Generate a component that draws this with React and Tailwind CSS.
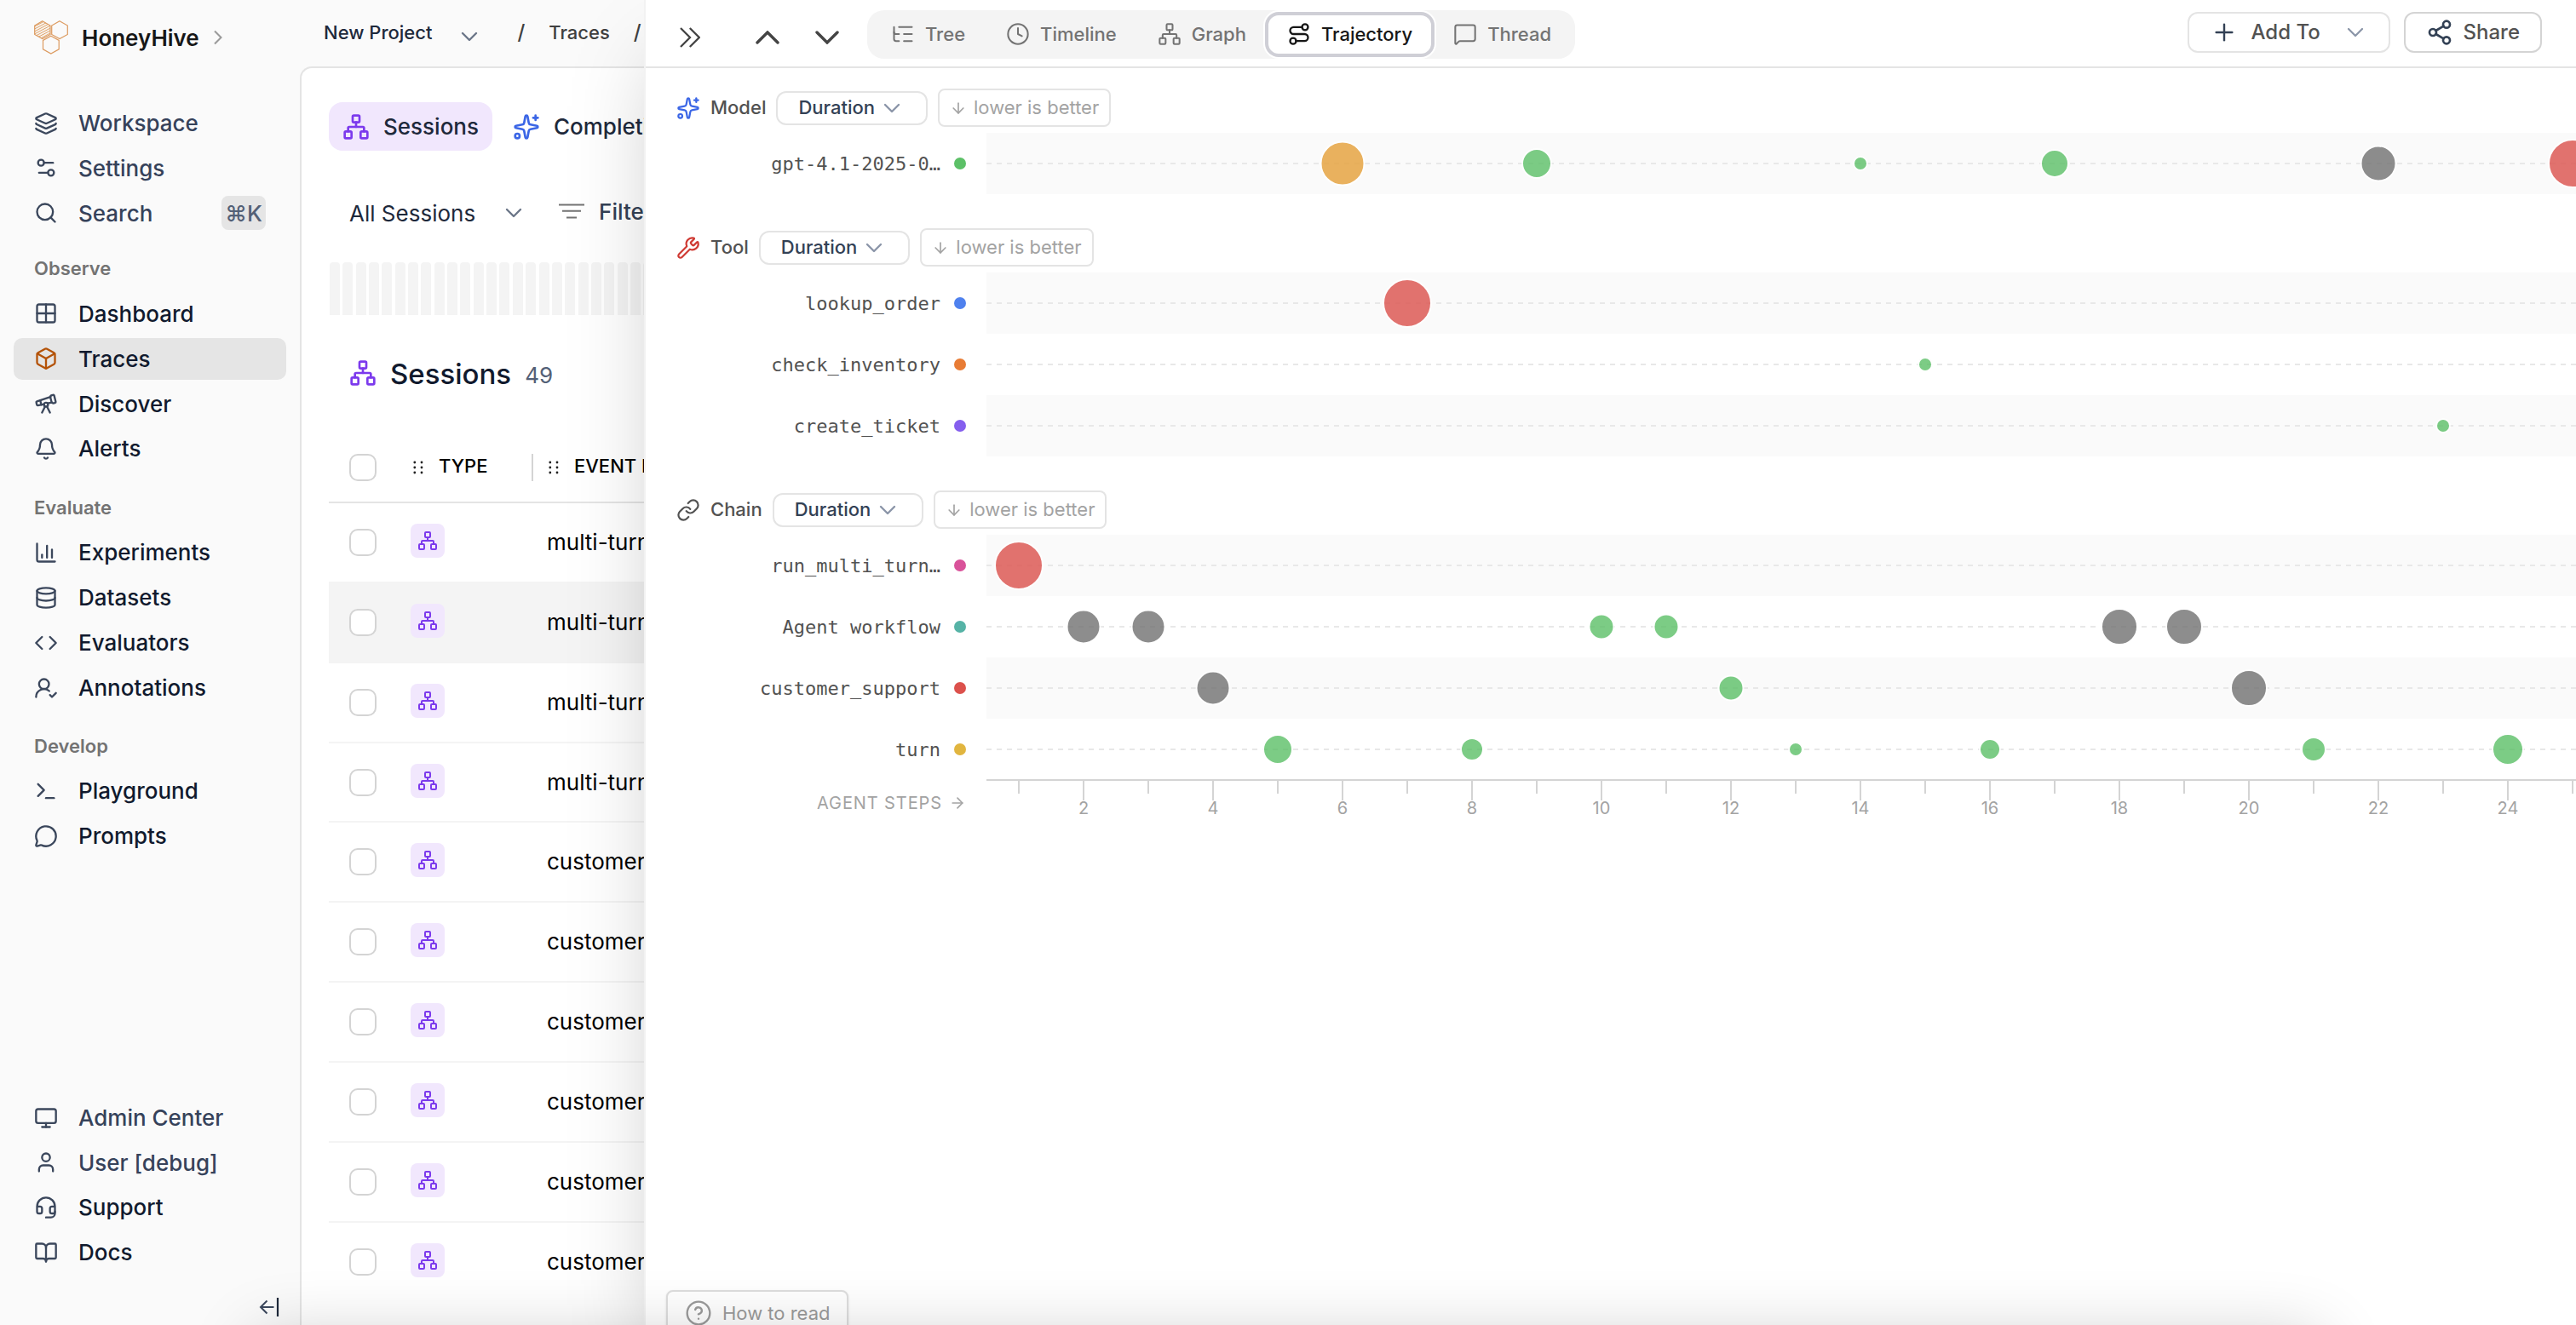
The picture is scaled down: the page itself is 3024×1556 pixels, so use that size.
import {
  ArrowDown,
  ArrowRight,
  Bell,
  BookOpen,
  Box,
  ChartColumn,
  ChevronDown,
  CircleHelp,
  Clock,
  Code,
  Database,
  Grid2x2,
  Headset,
  Layers,
  Link,
  ListTree,
  MessageCircle,
  MessageSquare,
  Monitor,
  Network,
  Plus,
  Route,
  Search,
  Settings2,
  Share2,
  Sparkles,
  Telescope,
  Terminal,
  User,
  UserRoundCheck,
  Wrench,
} from "lucide-react";
import clsx from "clsx";

const STEP = 76;
const LAST_STEP = 25;

const COLORS = {
  green: "#5cc067",
  orange: "#e6a038",
  red: "#dc514c",
  gray: "#717171",
};

const workspaceLinks = [
  { name: "Workspace", icon: Layers },
  { name: "Settings", icon: Settings2 },
  { name: "Search", icon: Search, shortcut: "⌘K" },
];

const navSections = [
  {
    title: "Observe",
    className: "mt-[25px]",
    links: [
      { name: "Dashboard", icon: Grid2x2 },
      { name: "Traces", icon: Box, active: true },
      { name: "Discover", icon: Telescope },
      { name: "Alerts", icon: Bell },
    ],
  },
  {
    title: "Evaluate",
    className: "mt-[29px]",
    links: [
      { name: "Experiments", icon: ChartColumn },
      { name: "Datasets", icon: Database },
      { name: "Evaluators", icon: Code },
      { name: "Annotations", icon: UserRoundCheck },
    ],
  },
  {
    title: "Develop",
    className: "mt-[28px]",
    links: [
      { name: "Playground", icon: Terminal },
      { name: "Prompts", icon: MessageCircle },
    ],
  },
];

const footerLinks = [
  { name: "Admin Center", icon: Monitor, muted: true },
  { name: "User [debug]", icon: User, muted: true },
  { name: "Support", icon: Headset },
  { name: "Docs", icon: BookOpen },
];

const sessions = [
  { name: "multi-turn-support" },
  { name: "multi-turn-support", active: true },
  { name: "multi-turn-support" },
  { name: "multi-turn-support" },
  { name: "customer-support" },
  { name: "customer-support" },
  { name: "customer-support" },
  { name: "customer-support" },
  { name: "customer-support" },
  { name: "customer-support" },
];

const tabs = [
  { name: "Tree", icon: ListTree },
  { name: "Timeline", icon: Clock },
  { name: "Graph", icon: Network },
  { name: "Trajectory", icon: Route, active: true },
  { name: "Thread", icon: MessageSquare },
];

const groups = [
  {
    name: "Model",
    icon: Sparkles,
    iconClass: "text-[#3b66e6]",
    lanes: [
      {
        label: "gpt-4.1-2025-0…",
        dot: "#5cc067",
        points: [
          [6, 24.5, "orange"],
          [9, 16, "green"],
          [14, 7, "green"],
          [17, 15, "green"],
          [22, 19.5, "gray"],
          [25, 27, "red"],
        ],
      },
    ],
  },
  {
    name: "Tool",
    icon: Wrench,
    iconClass: "text-[#cf3a33]",
    lanes: [
      { label: "lookup_order", dot: "#4f81ee", points: [[7, 27, "red"]] },
      { label: "check_inventory", dot: "#e87c35", points: [[15, 7, "green"]] },
      { label: "create_ticket", dot: "#855fee", points: [[23, 7, "green"]] },
    ],
  },
  {
    name: "Chain",
    icon: Link,
    iconClass: "text-[#525252]",
    lanes: [
      { label: "run_multi_turn…", dot: "#d9529a", points: [[1, 27, "red"]] },
      {
        label: "Agent workflow",
        dot: "#56b3a6",
        points: [
          [2, 18.5, "gray"],
          [3, 18.5, "gray"],
          [10, 13.5, "green"],
          [11, 13.5, "green"],
          [18, 20, "gray"],
          [19, 20, "gray"],
        ],
      },
      {
        label: "customer_support",
        dot: "#dc514c",
        points: [
          [4, 18.5, "gray"],
          [12, 13.5, "green"],
          [20, 20, "gray"],
        ],
      },
      {
        label: "turn",
        dot: "#e1b53f",
        points: [
          [5, 16, "green"],
          [8, 12, "green"],
          [13, 7, "green"],
          [16, 11, "green"],
          [21, 13, "green"],
          [24, 17, "green"],
        ],
      },
    ],
  },
];

const stepX = (step) => step * STEP - 38;

const Logo = () => (
  <svg width="40" height="40" viewBox="0 0 40 40" fill="none" stroke="#dc9a5f" strokeWidth="1.2">
    <defs>
      <pattern id="hatch" width="2.6" height="2.6" patternUnits="userSpaceOnUse" patternTransform="rotate(-28)">
        <path d="M0 1.3H2.6" stroke="#dfa269" strokeWidth="1" />
      </pattern>
    </defs>
    <path d="M9.8.8 19 6v10.4l-9.2 5.2L.7 16.4V6z" fill="url(#hatch)" />
    <path d="M30 .8 39.3 6v10.4L30 21.6l-9.3-5.2V6z" />
    <path d="M19.8 18.200 29.200 23.400v10.400l-9.400 5.300-9.300-5.300V23.400z" />
  </svg>
);

const NavItem = ({ name, icon: Icon, active, muted, shortcut }) => (
  <a
    className={clsx(
      "flex h-[49px] items-center rounded-[10px] px-6 text-[26px] font-medium",
      active && "bg-[#e5e5e5]",
      muted ? "text-[#36425a]" : "text-[#111a2e]"
    )}
  >
    <Icon className={clsx("mr-6 size-7 shrink-0", active ? "text-[#b45309]" : "text-[#3b475c]")} />
    <span>{name}</span>
    {shortcut && (
      <kbd className="ml-auto flex h-10 w-[52px] items-center justify-center rounded-lg bg-[#e5e5e5] font-['Inter',sans-serif] font-medium text-[#536076]">
        {shortcut}
      </kbd>
    )}
  </a>
);

const Sidebar = () => (
  <aside className="flex h-full w-[352px] shrink-0 flex-col bg-[#fafafa] px-4">
    <div className="mt-6 flex h-10 items-center pl-6">
      <Logo />
      <span className="ml-4 text-[26px] font-semibold text-[#171717]">HoneyHive</span>
      <svg className="ml-4" width="12" height="18" viewBox="0 0 12 18" fill="none" stroke="#9a9a9a" strokeWidth="2">
        <path d="M2 1.500 9.500 9 2 16.500" />
      </svg>
    </div>
    <nav className="mt-14 flex flex-col gap-[3.9px]">
      {workspaceLinks.map((link) => (
        <NavItem key={link.name} muted {...link} />
      ))}
    </nav>
    {navSections.map((section) => (
      <div key={section.title} className={section.className}>
        <h4 className="mb-3 flex h-8 items-center pl-6 text-[22px] font-semibold text-[#737373]">{section.title}</h4>
        <nav className="flex flex-col gap-[3.9px]">
          {section.links.map((link) => (
            <NavItem key={link.name} {...link} />
          ))}
        </nav>
      </div>
    ))}
    <nav className="mt-auto flex flex-col gap-[3.6px]">
      {footerLinks.map((link) => (
        <NavItem key={link.name} {...link} />
      ))}
    </nav>
    <div className="mt-7 mb-[9px] flex justify-end pr-2">
      <svg width="24" height="24" viewBox="0 0 24 24" fill="none">
        <path d="M17.500 12H2M9.500 4.500 2 12l7.500 7.500" stroke="#3b475c" strokeWidth="2" />
        <path d="M22 1v22" stroke="#1e293b" strokeWidth="2.200" />
      </svg>
    </div>
  </aside>
);

const Breadcrumbs = () => (
  <div className="flex h-[78px] items-center pb-[2px] pl-[28px] text-[22px] font-medium">
    <span className="text-[#1e293b]">New Project</span>
    <ChevronDown className="mt-[9px] ml-[28px] size-8 text-[#6b7688]" strokeWidth={1.800} />
    <span className="ml-[40px] text-[24px] text-[#404040]">/</span>
    <span className="ml-[28px] text-[#404040]">Traces</span>
    <span className="ml-[28px] text-[24px] text-[#404040]">/</span>
  </div>
);

const Checkbox = () => <span className="size-8 shrink-0 rounded-[10px] border-2 border-[#d4d4d4] bg-white" />;

const Grip = () => (
  <svg width="12" height="16" viewBox="0 0 12 16" fill="#222">
    {[2, 8, 14].map((y) => (
      <g key={y}>
        <circle cx="1.800" cy={y} r="1.400" />
        <circle cx="10" cy={y} r="1.400" />
      </g>
    ))}
  </svg>
);

const SessionsPage = () => (
  <main className="flex-1 rounded-tl-[14px] border-t-2 border-l-2 border-[#e4e4e4] bg-white pl-8">
    <div className="mt-10 flex gap-2 text-[26px] font-medium text-[#1e293b]">
      <button className="flex h-[57px] items-center gap-4 rounded-2xl bg-[#f1e7fd] px-4">
        <Network className="size-8 text-[#7c3aed]" />
        Sessions
      </button>
      <button className="flex h-[57px] items-center gap-4 px-4">
        <Sparkles className="size-8 text-[#3b66e6]" />
        Completions
      </button>
    </div>

    <div className="mt-[48px] flex h-[50px] items-center pl-6 text-[26px] text-[#1e293b]">
      <span>All Sessions</span>
      <ChevronDown className="ml-[29px] size-8 text-[#6b7688]" strokeWidth={1.800} />
      <svg className="mb-1 ml-[37px]" width="30" height="18" viewBox="0 0 30 18" stroke="#737373" strokeWidth="2">
        <path d="M0 1.500h30M4 8.700h22M9 16.500h12" />
      </svg>
      <span className="mb-[3px] ml-[17px] font-medium text-[#334155]">Filters</span>
    </div>

    <div className="mt-[33px] flex gap-[3.35px] pl-px">
      {Array.from({ length: 26 }, (_, i) => (
        <span key={i} className="h-[62px] w-[12px] shrink-0 rounded-t-[4px] bg-[#f4f4f4]" />
      ))}
    </div>

    <div className="mt-[46px] flex h-[48px] items-center pl-6">
      <Network className="mb-1 size-8 text-[#7c3aed]" />
      <h1 className="ml-4 text-[33px] font-medium text-[#111a2e]">Sessions</h1>
      <span className="ml-[16px] text-[26px] text-[#536076]">49</span>
    </div>

    <div className="mt-[45px] flex h-[82px] items-center border-b-2 border-[#e4e4e4] pl-6 text-[22px] font-medium text-black">
      <div className="flex w-[216px] items-center">
        <Checkbox />
        <span className="ml-[43px]"><Grip /></span>
        <span className="mb-[3px] ml-[18px]">TYPE</span>
      </div>
      <span className="-ml-[2px] h-8 w-[2px] bg-[#d4d4d4]" />
      <span className="ml-[18px]"><Grip /></span>
      <span className="mb-[3px] ml-[18px] whitespace-nowrap">EVENT NAME</span>
    </div>
    {sessions.map((session, i) => (
      <div
        key={i}
        className={clsx(
          "flex h-[93.86px] items-center border-b-2 pl-6 text-[26px] text-black",
          i === sessions.length - 1 ? "border-transparent" : "border-[#f4f4f4]",
          session.active && "bg-[#f4f4f4]"
        )}
      >
        <Checkbox />
        <span className="mb-[4px] ml-10 flex size-10 items-center justify-center rounded-lg bg-[#f1e7fd]">
          <Network className="size-6 text-[#7c3aed]" />
        </span>
        <span className="mb-[1px] ml-[120px] whitespace-nowrap">{session.name}</span>
      </div>
    ))}
  </main>
);

const DrawerHeader = () => (
  <header className="flex h-[80px] shrink-0 items-center border-b-2 border-[#e4e4e4] pt-[2px] pr-10 pl-10">
    <svg className="mt-2" width="24" height="24" viewBox="0 0 24 24" fill="none" stroke="#444" strokeWidth="2.300">
      <path d="M1 1 12 12 1 23M11.800 1l11 11-11 11" />
    </svg>
    <svg className="mt-2 ml-[65px]" width="28" height="16" viewBox="0 0 28 16" fill="none" stroke="#444" strokeWidth="3.400" strokeLinecap="round">
      <path d="M2 14 14 2l12 12" />
    </svg>
    <svg className="mt-2 ml-[42px]" width="28" height="16" viewBox="0 0 28 16" fill="none" stroke="#444" strokeWidth="3.400" strokeLinecap="round">
      <path d="M2 2l12 12L26 2" />
    </svg>
    <div className="ml-[33px] flex h-[57px] rounded-[20px] bg-[#f4f4f4] p-1">
      {tabs.map(({ name, icon: Icon, active }) => (
        <button
          key={name}
          className={clsx(
            "flex items-center gap-3 text-[22px] font-medium",
            active
              ? "rounded-[14px] border-2 border-[#cfcfd6] bg-white px-[22px] text-[#171717] shadow-[0_0_0_2px_#cfcfd6,0_0_0_4px_#fff]"
              : "px-6 text-[#737373]"
          )}
        >
          <Icon className="size-7" strokeWidth={active ? 2 : 1.750} />
          {name}
        </button>
      ))}
    </div>
    <div className="mb-[4px] ml-auto flex gap-4 text-[24px] font-medium text-[#525252]">
      <button className="flex h-12 w-[238px] items-center rounded-xl border-2 border-[#e4e4e4] pl-[25px]">
        <Plus className="size-8 text-[#334155]" strokeWidth={1.800} />
        <span className="ml-[16px]">Add To</span>
        <ChevronDown className="ml-[25px] size-8 text-[#8b95a8]" strokeWidth={1.700} />
      </button>
      <button className="flex h-12 items-center gap-3 rounded-xl border-2 border-[#d4d4d4] px-6">
        <Share2 className="size-8 text-[#334155]" />
        Share
      </button>
    </div>
  </header>
);

const Lane = ({ label, dot, points, shaded }) => (
  <div className="flex h-[72px] items-center">
    <span className="w-[346px] shrink-0 text-right font-['DejaVu_Sans_Mono',monospace] text-[22px] whitespace-nowrap text-[#525252]">
      {label}
    </span>
    <span className="mr-6 ml-4 size-[14px] shrink-0 rounded-full" style={{ backgroundColor: dot }} />
    <svg className={clsx("shrink-0", shaded && "bg-[#fafafa]")} width="1866" height="72">
      <line x1="0" x2="1866" y1="36" y2="36" stroke="#e8e8e8" strokeWidth="2" strokeDasharray="6 6" />
      {points.map(([step, r, color]) => (
        <circle
          key={step}
          cx={stepX(step)}
          cy="36"
          r={r + 1}
          fill={COLORS[color]}
          stroke="#fff"
          strokeWidth="2"
          opacity="0.8"
        />
      ))}
    </svg>
  </div>
);

const Axis = () => (
  <div className="-mt-px flex">
    <div className="flex w-[400px] shrink-0 items-center justify-end gap-2 pt-[6px] pr-6 text-[20px] tracking-[0.045em] text-[#a3a3a3]">
      AGENT STEPS
      <ArrowRight className="size-5" strokeWidth={2} />
    </div>
    <svg className="shrink-0 font-['Inter',sans-serif]" width="1866" height="50" stroke="#d4d4d4" strokeWidth="2">
      <line x1="0" x2="1866" y1="1" y2="1" />
      {Array.from({ length: LAST_STEP }, (_, i) => i + 1).map((step) => (
        <g key={step}>
          <line x1={stepX(step)} x2={stepX(step)} y1="2" y2={step % 2 ? 17 : 25} />
          {step % 2 === 0 && (
            <text x={stepX(step)} y="41" textAnchor="middle" stroke="none" fill="#a3a3a3" fontSize="20">
              {step}
            </text>
          )}
        </g>
      ))}
    </svg>
  </div>
);

const Drawer = () => (
  <section className="absolute inset-y-0 right-0 left-[756px] flex flex-col border-l-2 border-[#f2f2f2] bg-white shadow-[0_50px_100px_-24px_rgba(0,0,0,0.25)]">
    <DrawerHeader />
    <div className="flex flex-col gap-10 overflow-hidden pt-6">
      {groups.map(({ name, icon: Icon, iconClass, lanes }) => (
        <div key={name}>
          <div className="mb-[7px] flex h-[45px] items-center pl-9 text-[22px]">
            <Icon className={clsx("size-7", iconClass)} strokeWidth={1.900} />
            <span className="ml-3 font-medium text-[#525252]">{name}</span>
            <button className="ml-3 flex h-10 items-center rounded-xl border-2 border-[#e4e4e4] px-6 font-medium text-[#334155]">
              Duration
              <ChevronDown className="ml-[4px] size-8" color="#8b95a8" strokeWidth={1.800} />
            </button>
            <span className="ml-3 flex h-[45px] items-center gap-2 rounded-lg border-2 border-[#e4e4e4] px-3 text-[#a3a3a3]">
              <ArrowDown className="size-5" strokeWidth={2} />
              lower is better
            </span>
          </div>
          {lanes.map((lane, i) => (
            <Lane key={lane.label} {...lane} shaded={i % 2 === 0} />
          ))}
          {name === "Chain" && <Axis />}
        </div>
      ))}
    </div>
    <button className="absolute top-[1515px] left-[24px] flex h-[54px] items-center gap-3 rounded-lg border-2 border-[#dedede] bg-white px-5 text-[22px] text-[#9b9b9b] shadow-sm">
      <CircleHelp className="size-8" strokeWidth={1.750} />
      How to read
    </button>
  </section>
);

const App = () => (
  <div className="relative h-[1556px] w-[3024px] overflow-hidden bg-[#fafafa] font-['Inter',sans-serif]">
    <div className="flex h-full">
      <Sidebar />
      <div className="flex min-w-0 flex-1 flex-col">
        <Breadcrumbs />
        <SessionsPage />
      </div>
    </div>
    <Drawer />
    <div className="pointer-events-none absolute top-[1570px] right-[300px] left-[300px] h-[200px] shadow-[0_0_80px_rgba(0,0,0,0.2)]" />
  </div>
);

export default App;
